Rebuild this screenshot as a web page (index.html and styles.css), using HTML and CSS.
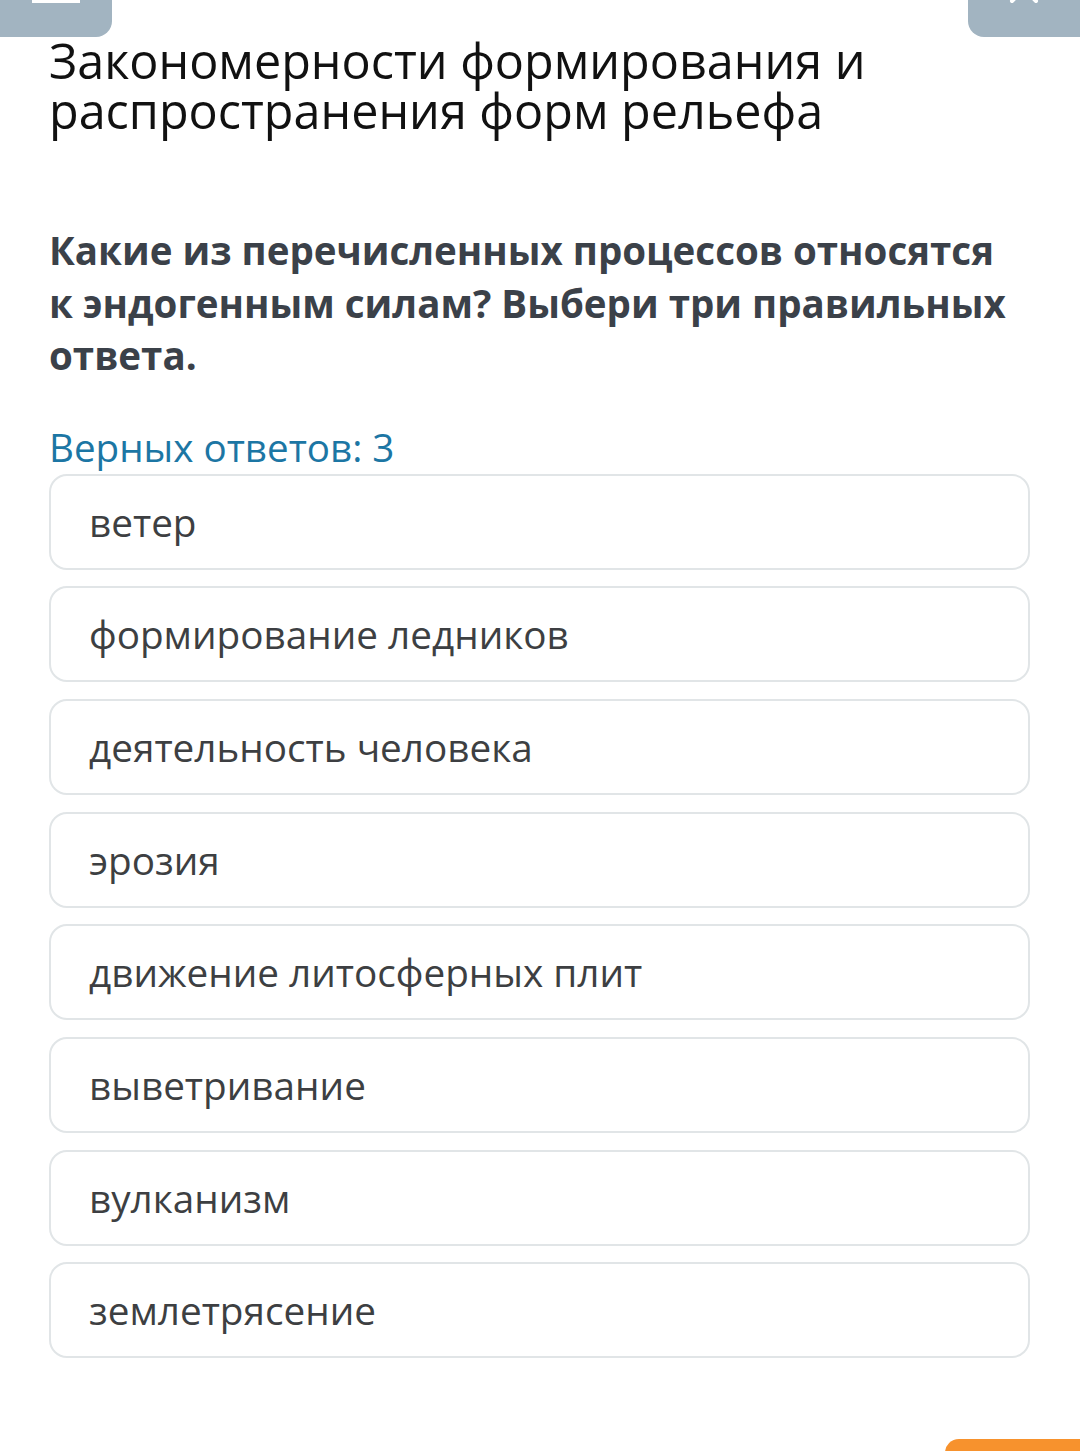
FILE: index.html
```html
<!DOCTYPE html>
<html lang="ru">
<head>
<meta charset="utf-8">
<title>Тест</title>
<link rel="stylesheet" href="styles.css">
</head>
<body>
<div class="page">
  <header class="topbar">
    <div class="tbtn tbtn-left"><span class="bar"></span></div>
    <div class="tbtn tbtn-right">
      <svg class="xicon" width="112" height="37" viewBox="0 0 112 37"><path d="M44 1 L68 -23 M68 1 L44 -23" stroke="#fff" stroke-width="4" stroke-linecap="round" fill="none"/></svg>
    </div>
  </header>
  <main class="content">
    <h1 class="title">Закономерности формирования и распространения форм рельефа</h1>
    <p class="question">Какие из перечисленных процессов относятся к эндогенным силам? Выбери три правильных ответа.</p>
    <p class="count">Верных ответов: 3</p>
    <ul class="options">
      <li class="option">ветер</li>
      <li class="option">формирование ледников</li>
      <li class="option">деятельность человека</li>
      <li class="option">эрозия</li>
      <li class="option">движение литосферных плит</li>
      <li class="option">выветривание</li>
      <li class="option">вулканизм</li>
      <li class="option">землетрясение</li>
    </ul>
  </main>
  <footer class="bottom">
    <div class="next-btn"></div>
  </footer>
</div>
</body>
</html>
```

FILE: styles.css
```css
html, body {
  margin: 0;
  padding: 0;
  background: #ffffff;
}
body {
  font-family: "Open Sans", "Noto Sans", sans-serif;
  width: 1080px;
  height: 1451px;
  overflow: hidden;
}
.page {
  display: flex;
  flex-direction: column;
}
.topbar {
  display: flex;
  justify-content: space-between;
  height: 37px;
}
.tbtn {
  width: 112px;
  height: 37px;
  background: #a2b4c1;
  position: relative;
  overflow: hidden;
}
.tbtn-left {
  border-radius: 0 0 16px 0;
}
.tbtn-right {
  border-radius: 0 0 0 16px;
}
.bar {
  position: absolute;
  left: 32px;
  top: 0;
  width: 48px;
  height: 3px;
  background: #ffffff;
}
.xicon {
  position: absolute;
  left: 0;
  top: 0;
}
.content {
  padding: 0 50px 0 49px;
}
.title {
  margin: -2px 0 0;
  font-weight: 400;
  font-size: 48.5px;
  line-height: 50px;
  color: #111111;
}
.question {
  margin: 89px 0 0;
  max-width: 972px;
  font-weight: 700;
  font-size: 38.5px;
  line-height: 52.5px;
  color: #3b4149;
}
.count {
  margin: 40px 0 0;
  font-size: 38.6px;
  line-height: 50px;
  color: #1c76a4;
}
.options {
  list-style: none;
  margin: 2px 0 0;
  padding: 0;
  display: flex;
  flex-direction: column;
  gap: 16.7px;
}
.option {
  height: 92px;
  border: 2px solid #e1e5e7;
  border-radius: 18px;
  padding: 0 0 0 38px;
  display: flex;
  align-items: center;
  font-size: 38.7px;
  color: #3d3f42;
}
.bottom {
  display: flex;
  justify-content: flex-end;
  margin-top: 81px;
}
.next-btn {
  width: 135px;
  height: 40px;
  background: #f7922d;
  border-radius: 14px 0 0 0;
}
```
